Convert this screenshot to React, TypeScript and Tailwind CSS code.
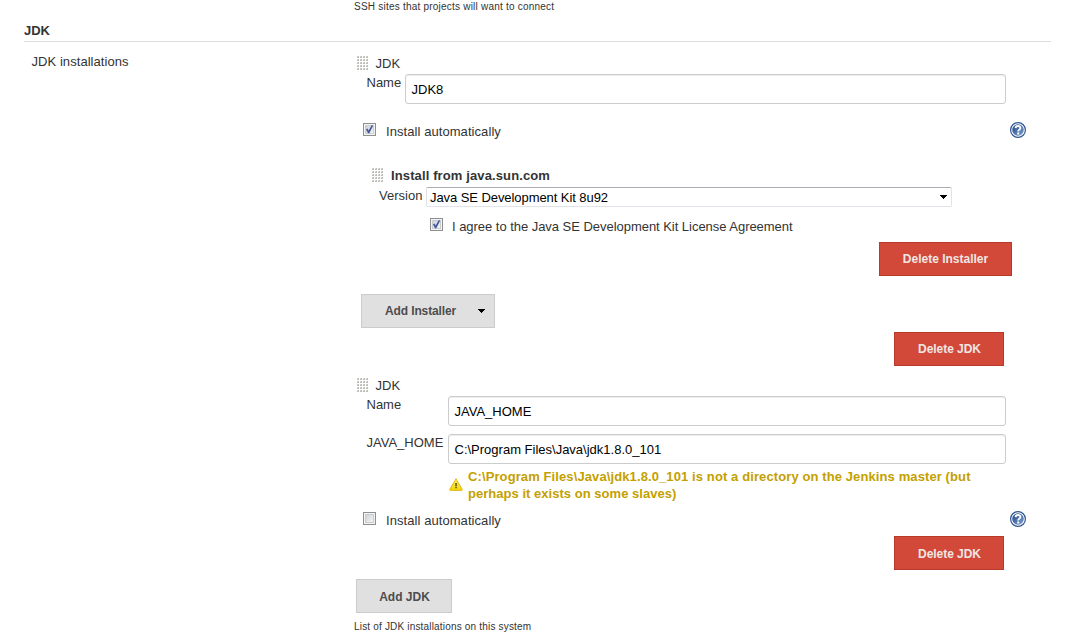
import React from "react";

function Grip() {
  return (
    <svg width="12" height="14" viewBox="0 0 12 14" className="block shrink-0" shapeRendering="crispEdges">
      {[0, 3, 6, 9].map((x) =>
        [0, 3, 6, 9, 12].map((y) => (
          <g key={`${x}-${y}`}>
            <rect x={x} y={y} width="2" height="2" fill="#d8d8d4" />
            <rect x={x + 1} y={y} width="1" height="2" fill="#bcbcb8" />
            <rect x={x} y={y + 1} width="1" height="1" fill="#bcbcb8" />
          </g>
        ))
      )}
    </svg>
  );
}

function Checkbox({ checked = false }: { checked?: boolean }) {
  return (
    <svg width="13" height="13" viewBox="0 0 13 13" className="block shrink-0">
      <defs>
        <linearGradient id="boxFill" x1="0" y1="0" x2="1" y2="1">
          <stop offset="0" stopColor="#cbcfd5" />
          <stop offset="1" stopColor="#f8f8f8" />
        </linearGradient>
      </defs>
      <rect x="0.5" y="0.5" width="12" height="12" fill="#f4f4f4" stroke="#8e8f8f" />
      <rect x="2.5" y="2.5" width="8" height="8" fill="url(#boxFill)" stroke="#c9ccd1" />
      {checked && (
        <path d="M3 6.2 L4.5 5.4 L5.7 7.5 L8.6 2.2 L10.2 2.4 L6.3 10.2 L5 10.2 Z" fill="#42569b" />
      )}
    </svg>
  );
}

function Help() {
  return (
    <svg width="16" height="16" viewBox="0 0 16 16" className="block shrink-0">
      <defs>
        <linearGradient id="helpFill" x1="0" y1="0" x2="1" y2="1">
          <stop offset="0" stopColor="#1f4583" />
          <stop offset="1" stopColor="#7fa3d2" />
        </linearGradient>
      </defs>
      <circle cx="8" cy="8" r="7.4" fill="#fff" stroke="#2f5591" strokeWidth="1.2" />
      <circle cx="8" cy="8" r="5.8" fill="url(#helpFill)" />
      <path d="M5.6 6.1 C5.7 3.3 10.4 3.3 10.4 6 C10.4 7.6 8.2 7.7 8.2 9.5" fill="none" stroke="#fff" strokeWidth="1.9" />
      <rect x="7.2" y="10.5" width="2" height="2" fill="#fff" />
    </svg>
  );
}

function Warning() {
  return (
    <svg width="14" height="13" viewBox="0 0 14 13" className="block shrink-0">
      <defs>
        <linearGradient id="warnFill" x1="0" y1="0" x2="0" y2="1">
          <stop offset="0" stopColor="#fbec6a" />
          <stop offset="1" stopColor="#f3d500" />
        </linearGradient>
      </defs>
      <path d="M7 0.7 L13.4 11.6 Q13.5 12.4 12.8 12.4 H1.2 Q0.5 12.4 0.6 11.6 Z" fill="url(#warnFill)" stroke="#dfbd1c" strokeWidth="1" strokeLinejoin="round" />
      <rect x="6.2" y="5" width="1.7" height="3.3" fill="#6b6120" />
      <rect x="6.2" y="9" width="1.7" height="1.2" fill="#6b6120" />
    </svg>
  );
}

function Caret() {
  return (
    <svg width="7" height="4" viewBox="0 0 7 4" className="block shrink-0" shapeRendering="crispEdges">
      <path d="M0 0H7V1H6V2H5V3H4V4H3V3H2V2H1V1H0Z" fill="#000" />
    </svg>
  );
}

function Field({ value, width }: { value: string; width: string }) {
  return (
    <div className={`flex h-[30px] items-center rounded-[3px] border border-[#ccc] pt-[2px] pl-[5.5px] text-black shadow-[inset_0_1px_1px_rgba(0,0,0,0.075)] ${width}`}>
      {value}
    </div>
  );
}

function Button({ label, look }: { label: React.ReactNode; look: string }) {
  return (
    <button className={`flex h-[34px] shrink-0 items-center border text-[12px] font-bold ${look}`}>{label}</button>
  );
}

const red = "justify-center border-[#b83a2a] bg-[#d24939] text-[#f0e6e4]";
const gray = "border-[#ccc] bg-[#e0e0e0] text-[#4d4d4d]";

function InstallRow({ checked = false }: { checked?: boolean }) {
  return (
    <div className="flex h-4 items-start pl-[9px]">
      <div className="pt-px"><Checkbox checked={checked} /></div>
      <span className="ml-[10px] mt-[2px] tracking-[0.07px]">Install automatically</span>
      <div className="ml-auto mr-[43px]"><Help /></div>
    </div>
  );
}

export default function App() {
  return (
    <div className="h-[635px] w-[1069px] overflow-hidden bg-white font-['Liberation_Sans',Arial,sans-serif] text-[13px] leading-4 whitespace-nowrap text-[#333]">
      <div className="h-[22px] pl-[354px] text-[10px] leading-[14px]">
        <span className="tracking-[0.22px]">SSH sites that projects will want to connect</span>
      </div>
      <h2 className="mr-[18px] ml-6 h-5 border-b border-[#ddd] pt-px font-bold">JDK</h2>

      <div className="flex">
        <div className="w-[354px] shrink-0 pt-3 pl-[31.5px] tracking-[0.06px]">JDK installations</div>
        <div className="flex h-[593px] w-[715px] flex-col pt-[13px]">
          <section>
            <div className="flex h-[19px] items-start pl-[3px]">
              <div className="pt-px"><Grip /></div>
              <span className="mt-px ml-[6.5px]">JDK</span>
            </div>
            <div className="flex h-[48px] items-start pl-[12.5px]">
              <span className="w-[38.5px] pt-px">Name</span>
              <Field value="JDK8" width="w-[601px]" />
            </div>
            <InstallRow checked />

            <div className="mt-[29px] flex h-5 items-start pl-[18px]">
              <div className="pt-px"><Grip /></div>
              <span className="mt-px ml-[7px] font-bold tracking-[0.12px]">Install from java.sun.com</span>
            </div>
            <div className="flex h-[31px] items-start pl-[25px]">
              <span className="mt-px w-[47px]">Version</span>
              <div className="flex h-5 w-[526px] items-center justify-between rounded-[2px] border border-[#e2e3ea] border-t-[#abadb3] pr-1 pl-[3px] text-black">
                <span className="pt-[2px] tracking-[-0.07px]">Java SE Development Kit 8u92</span>
                <Caret />
              </div>
            </div>
            <div className="flex h-6 items-start pl-[76px]">
              <Checkbox checked />
              <span className="mt-px ml-[9px] tracking-[-0.035px]">I agree to the Java SE Development Kit License Agreement</span>
            </div>
            <div className="flex h-[52px] justify-end pr-[57px]">
              <Button label="Delete Installer" look={`w-[133px] ${red}`} />
            </div>
            <div className="h-[38px] pl-[7px]">
              <Button
                label={<><span className="tracking-[-0.12px]">Add Installer</span><Caret /></>}
                look={`w-[134px] justify-between pl-[23px] pr-[9px] ${gray}`}
              />
            </div>
            <div className="flex h-[45px] justify-end pr-[65px]">
              <Button label="Delete JDK" look={`w-[110px] pl-px tracking-[-0.05px] ${red}`} />
            </div>
          </section>

          <section>
            <div className="flex h-[19px] items-start pl-[3px]">
              <div className="pt-px"><Grip /></div>
              <span className="mt-px ml-[6.5px]">JDK</span>
            </div>
            <div className="flex h-[38px] items-start pl-[12.5px]">
              <span className="mt-px w-[81.5px]">Name</span>
              <Field value="JAVA_HOME" width="w-[558px]" />
            </div>
            <div className="flex h-[34px] items-start pl-[12.5px]">
              <span className="mt-px w-[81.5px]">JAVA_HOME</span>
              <Field value="C:\Program Files\Java\jdk1.8.0_101" width="w-[558px]" />
            </div>
            <div className="flex h-[43px] items-start pl-[95px] font-bold text-[#c4a000]">
              <div className="pt-[10px]"><Warning /></div>
              <p className="ml-[5px] leading-[17px]">
                <span className="tracking-[0.105px]">C:\Program Files\Java\jdk1.8.0_101 is not a directory on the Jenkins master (but</span><br />
                <span className="tracking-[0.03px]">perhaps it exists on some slaves)</span>
              </p>
            </div>
            <InstallRow />
            <div className="mt-[9px] flex h-[43px] justify-end pr-[65px]">
              <Button label="Delete JDK" look={`w-[110px] pt-[2px] pl-px tracking-[-0.05px] ${red}`} />
            </div>
          </section>

          <div className="flex h-[41px] pl-[2px]">
            <Button label="Add JDK" look={`w-24 justify-center pt-[2px] pl-px ${gray}`} />
          </div>
          <div className="text-[10px] leading-[14px] tracking-[0.18px]">List of JDK installations on this system</div>
        </div>
      </div>
    </div>
  );
}
